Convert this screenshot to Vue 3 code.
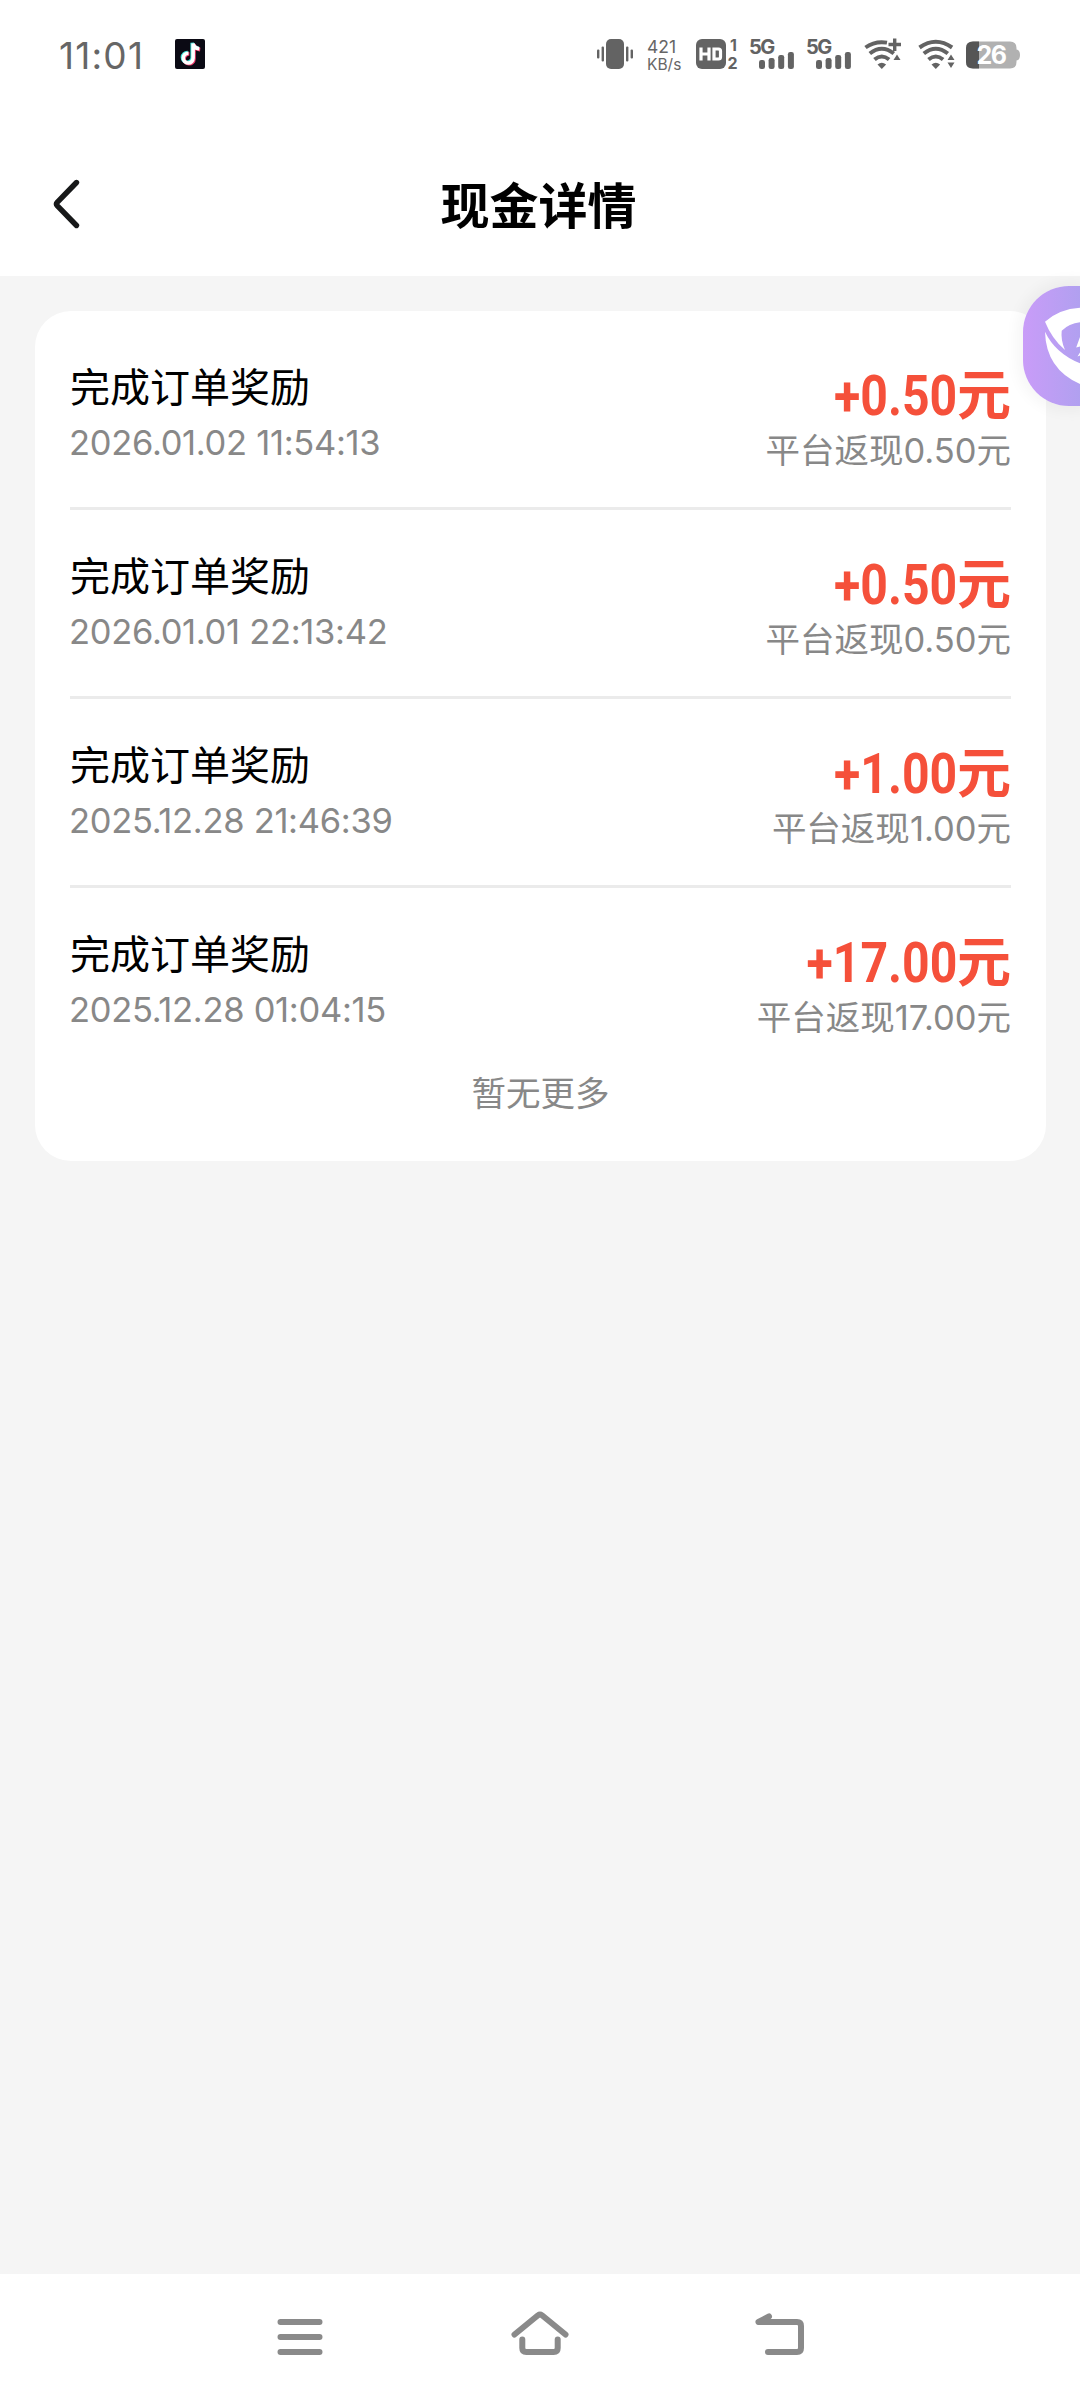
<script setup>
const records = [
  { id: 1, title: '完成订单奖励', time: '2026.01.02 11:54:13', amount: '0.50' },
  { id: 2, title: '完成订单奖励', time: '2026.01.01 22:13:42', amount: '0.50' },
  { id: 3, title: '完成订单奖励', time: '2025.12.28 21:46:39', amount: '1.00' },
  { id: 4, title: '完成订单奖励', time: '2025.12.28 01:04:15', amount: '17.00' },
]
</script>

<template>
  <div class="screen">
    <div class="status">
      <span class="clock">11:01</span>
      <svg class="tiktok" width="30" height="30" viewBox="0 0 30 30">
        <rect width="30" height="30" rx="2" fill="#0b0a14" />
        <g fill="none" stroke-width="3.6">
          <path transform="translate(-.9 -.7)" stroke="#3fe0dc" d="M13.5 14.2a4.9 4.9 0 1 0 4.6 4.9V4.5q.6 4.7 6.2 5.3" />
          <path transform="translate(.9 .8)" stroke="#f0386b" d="M13.5 14.2a4.9 4.9 0 1 0 4.6 4.9V4.5q.6 4.7 6.2 5.3" />
          <path stroke="#fff" d="M13.5 14.2a4.9 4.9 0 1 0 4.6 4.9V4.5q.6 4.7 6.2 5.3" />
        </g>
      </svg>
      <div class="indicators">
        <svg class="vibrate" width="36" height="30" viewBox="0 0 36 30" fill="#636363">
          <rect x="9" width="18" height="30" rx="5" />
          <rect x="0" y="10.5" width="2.4" height="9" rx="1" />
          <rect x="4.6" y="7.5" width="2.4" height="15" rx="1" />
          <rect x="29" y="7.5" width="2.4" height="15" rx="1" />
          <rect x="33.6" y="10.5" width="2.4" height="9" rx="1" />
        </svg>
        <div class="speed"><span>421</span><span>KB/s</span></div>
        <svg class="hd" width="43" height="32" viewBox="0 0 43 32">
          <rect y="1" width="30" height="30" rx="6" fill="#636363" />
          <path d="M5 9.5v13M13 9.5v13M5 16h8M18 11h4.5q2 0 2 2v6q0 2-2 2H18z" fill="none" stroke="#fff" stroke-width="3.2" />
          <text x="34" y="13" class="sim">1</text>
          <text x="31.6" y="31" class="sim">2</text>
        </svg>
        <svg v-for="n in 2" :key="n" class="signal" width="46" height="32" viewBox="0 0 46 32" fill="#636363">
          <text x="-1" y="15.5" class="gen">5G</text>
          <rect x="9" y="22" width="6" height="9" rx="2.3" />
          <rect x="18.6" y="20" width="6" height="11" rx="2.3" />
          <rect x="28.2" y="17" width="6" height="14" rx="2.3" />
          <rect x="37.9" y="14" width="6" height="17" rx="2.3" />
        </svg>
        <svg class="wifi-plus" width="38" height="32" viewBox="0 0 38 32">
          <g fill="none" stroke="#636363" stroke-width="4">
            <path d="M1.5 9.5Q11 2.6 23 4.6" />
            <path d="M5.8 15.5q12-9.5 24 0" />
            <path d="M10.5 21.5q7.3-6 14.6 0" />
          </g>
          <path d="M13.5 26.5q4.3-3.4 8.6 0L17.8 31z" fill="#636363" />
          <path d="M24.5 6.5h12.5M30.7.5v12.5" stroke="#636363" stroke-width="3.4" fill="none" />
          <path d="M29.5 22h7l-3.5-5.5z" fill="#636363" />
        </svg>
        <svg class="wifi" width="38" height="32" viewBox="0 0 38 32">
          <g fill="none" stroke="#636363" stroke-width="4">
            <path d="M1.5 9.5q16.3-11.5 32.6 0" />
            <path d="M5.8 15.5q12-9.5 24 0" />
            <path d="M10.5 21.5q7.3-6 14.6 0" />
          </g>
          <path d="M13.5 26.5q4.3-3.4 8.6 0L17.8 31z" fill="#636363" />
          <path d="M29.5 22h7l-3.5-5.5zM29.5 24.5h7L33 30z" fill="#636363" />
        </svg>
        <svg class="battery" width="54" height="28" viewBox="0 0 54 28">
          <path d="M7 .5h37q6.500 0 6.500 6.500v1.500q3.500.5 3.500 5.500t-3.500 5.500V21q0 6.500-6.500 6.500H7Q0 27.500 0 21V7Q0 .5 7 .5z" fill="#b1b1b1" />
          <path d="M7 .5h6v27H7Q0 27.500 0 21V7Q0 .5 7 .5z" fill="#555" />
          <text x="10.500" y="23.300" class="level">26</text>
        </svg>
      </div>
    </div>

    <header class="header">
      <svg class="back" width="28" height="50" viewBox="0 0 28 50">
        <path d="M24.500 3.500 5.200 23.300q-1.500 1.700 0 3.400L24.500 46.500" fill="none" stroke="#171819" stroke-width="5.400" stroke-linecap="round" />
      </svg>
      <h1>现金详情</h1>
    </header>

    <main class="body">
      <section class="card">
        <div v-for="r in records" :key="r.id" class="row">
          <div class="left">
            <div class="name">{{ r.title }}</div>
            <div class="time">{{ r.time }}</div>
          </div>
          <div class="right">
            <div class="amount"><span class="num">+{{ r.amount }}</span><span class="unit">元</span></div>
            <div class="cashback">平台返现<span>{{ r.amount }}</span>元</div>
          </div>
        </div>
        <div class="end">暂无更多</div>
      </section>
    </main>

    <nav class="navbar">
      <svg width="60" height="60" viewBox="0 0 60 60" class="nav-icon">
        <path d="M10.500 13h39M10.500 28h39M10.500 43h39" />
      </svg>
      <svg width="60" height="60" viewBox="0 0 60 60" class="nav-icon">
        <path d="M4.500 25.500 28 6.300q2-1.500 4 0l23.500 19.200M12.300 30.500V39q0 4 4 4h27.400q4 0 4-4v-8.500" />
      </svg>
      <svg width="60" height="60" viewBox="0 0 60 60" class="nav-icon">
        <path d="M19 7.500 8.500 13H47q4 0 4 4v22q0 4-4 4H18" />
      </svg>
    </nav>

    <div class="float">
      <svg width="57" height="120" viewBox="0 0 57 120" fill="#fff">
        <path d="M22 35.700Q36 23 57 21.700v14.600Q46 37.500 38.700 44.700 37.600 54 42 64 29 53 22 35.700z" />
        <path d="M22 45.700Q32 67 57 77.300V98Q23 83 22 45.700z" />
        <path d="M53.200 61.500 57 51v9.500zM54.500 70.500l2.500-4v3z" />
      </svg>
    </div>
  </div>
</template>

<style>
body {
  background: #f5f5f5;
}
</style>

<style scoped>
.screen {
  position: relative;
  display: flex;
  flex-direction: column;
  width: 1080px;
  height: 2400px;
  overflow: hidden;
  background: #f5f5f5;
  font-family: Inter, "Noto Sans CJK SC", sans-serif;
}
svg {
  overflow: visible;
}
.status {
  display: flex;
  align-items: flex-start;
  height: 110px;
  padding: 38px 60px 0 59px;
  box-sizing: border-box;
  background: #fff;
}
.clock {
  width: 116px;
  font-size: 37px;
  line-height: 36px;
  letter-spacing: 1.2px;
  color: #666;
}
.tiktok {
  margin-top: 1px;
}
.indicators {
  display: flex;
  align-items: flex-start;
  margin-left: auto;
}
.vibrate {
  margin-top: 1px;
}
.speed {
  display: flex;
  flex-direction: column;
  width: 49px;
  margin-left: 14px;
  font-size: 17.5px;
  line-height: 18px;
  color: #666;
  white-space: nowrap;
}
.speed span:last-child {
  font-size: 15.5px;
}
.sim {
  font: 700 16px Inter, sans-serif;
  fill: #636363;
}
.gen {
  font: 700 20px Inter, sans-serif;
  letter-spacing: -1.5px;
}
.signal {
  margin-left: 11px;
}
.wifi-plus {
  margin-left: 11px;
}
.wifi {
  margin-left: 16px;
}
.battery {
  margin: 3px 0 0 10px;
}
.level {
  font: 700 25px Inter, sans-serif;
  letter-spacing: -1.5px;
  fill: #fff;
}
.header {
  display: grid;
  grid-template-columns: 120px 1fr 120px;
  align-items: center;
  height: 166px;
  background: #fff;
}
.back {
  margin: 22px 0 0 52px;
}
h1 {
  margin: 27px 3px 0 0;
  text-align: center;
  font-size: 49px;
  line-height: 60px;
  font-weight: 700;
  color: #000;
}
.body {
  flex: 1;
  padding: 35px 34px 0 35px;
}
.card {
  height: 850px;
  padding: 10px 35px 0;
  box-sizing: border-box;
  border-radius: 36px;
  background: #fff;
}
.row {
  display: flex;
  justify-content: space-between;
  height: 189px;
  box-sizing: border-box;
  border-bottom: 3px solid #ebebeb;
}
.row:nth-child(4) {
  height: 183px;
  border-bottom: 0;
}
.left {
  padding-top: 42px;
}
.name {
  font-size: 40px;
  line-height: 50px;
  color: #000;
}
.time {
  margin: 10px 0 0 -1px;
  font-size: 34.5px;
  line-height: 40px;
  letter-spacing: -0.3px;
  color: #888;
}
.right {
  display: flex;
  flex-direction: column;
  align-items: flex-end;
  padding-top: 43px;
}
.amount {
  display: flex;
  align-items: baseline;
  height: 64px;
  line-height: 64px;
  color: #f5503a;
  font-weight: 700;
}
.num {
  font-family: Roboto, sans-serif;
  font-size: 56px;
  transform: scaleX(0.86);
  transform-origin: right;
}
.unit {
  font-size: 54px;
}
.cashback {
  font-size: 34.5px;
  line-height: 46px;
  color: #888;
}
.end {
  text-align: center;
  font-size: 34.5px;
  line-height: 46px;
  color: #888;
}
.navbar {
  display: flex;
  justify-content: center;
  gap: 180px;
  height: 126px;
  padding-top: 35px;
  box-sizing: border-box;
  background: #fff;
}
.nav-icon {
  fill: none;
  stroke: #8a8a8a;
  stroke-width: 6;
  stroke-linecap: round;
  stroke-linejoin: round;
}
.float {
  position: absolute;
  top: 286px;
  right: 0;
  width: 57px;
  height: 120px;
  border-radius: 46px 0 0 46px;
  background: linear-gradient(90deg, #c99cf8, #b1a0f0);
  box-shadow: 0 0 14px 6px rgba(0, 0, 0, 0.04);
}
</style>
